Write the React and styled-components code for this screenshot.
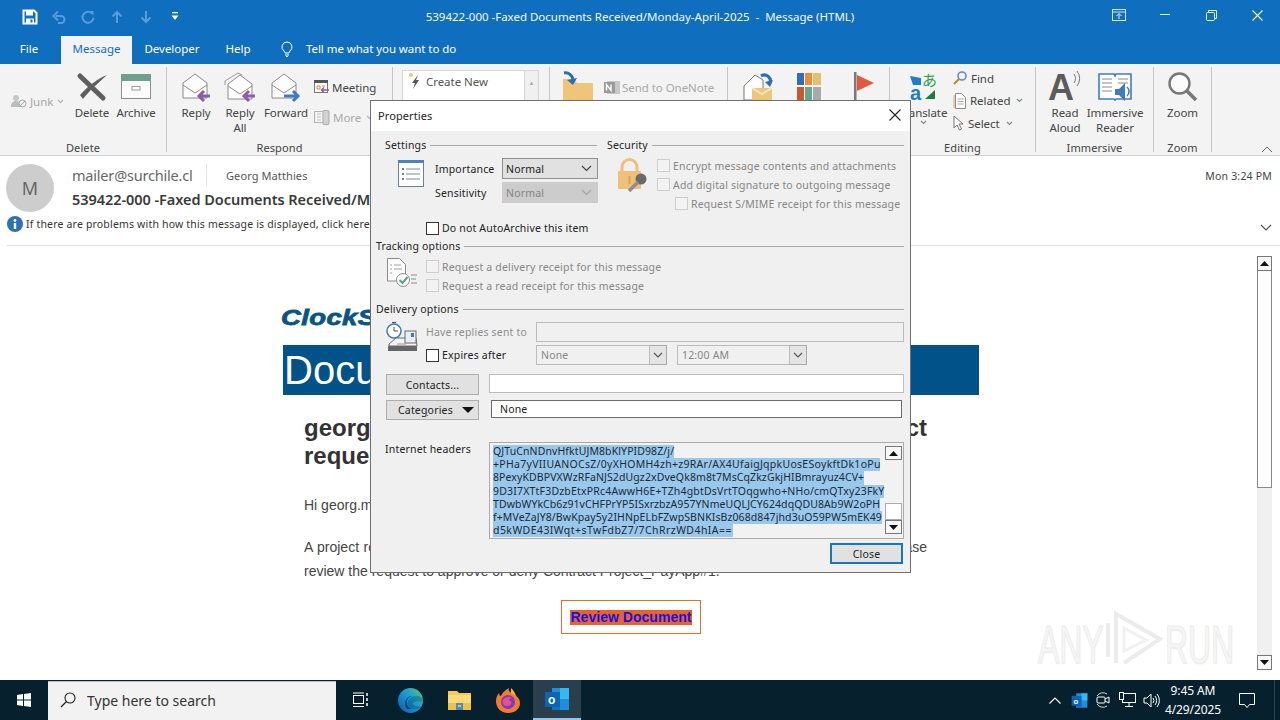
import React from "react";
import styled, { createGlobalStyle } from "styled-components";

const Global = createGlobalStyle`
  html, body { margin: 0; padding: 0; background: #fff; }
  * { box-sizing: border-box; }
  body { font-family: "Noto Sans", "Open Sans", sans-serif; font-size: 11px; color: #333; }
`;

const Screen = styled.div`
  position: relative; width: 1280px; height: 720px; overflow: hidden;
  display: flex; flex-direction: column; background: #fff;
`;
const TitleBar = styled.div`
  height: 36px; background: #106ebe; display: grid; grid-template-columns: 1fr auto 1fr; align-items: center; color: #fff;
`;
const Qat = styled.div`display: flex; padding-left: 15px; margin-top: -3px;`;
const QatButton = styled.div`width: 29px; height: 28px; display: flex; align-items: center; justify-content: center;`;
const Title = styled.div`font-size: 11.5px; letter-spacing: -0.01px; white-space: pre; margin-top: -3px; color: #f4f8fc;`;
const WindowControls = styled.div`display: flex; justify-content: flex-end; margin-top: -6px;`;
const WinButton = styled.div`width: 46px; height: 30px; display: flex; align-items: center; justify-content: center;`;

const TabBar = styled.div`height: 28px; background: #106ebe; display: flex; align-items: stretch; color: #fff; font-size: 11.5px;`;
const Tab = styled.div`
  width: ${p => p.$w}px; margin-left: ${p => p.$ml || 0}px; display: flex; align-items: center; justify-content: center; padding-bottom: 3px;
  background: ${p => p.$active ? "#f3f3f3" : "transparent"}; color: ${p => p.$active ? "#106ebe" : "#fff"};
`;
const TellMe = styled.div`display: flex; align-items: center; gap: 13px; margin-left: 17px; font-size: 11.5px; letter-spacing: -.06px; padding-bottom: 3px;`;

const Ribbon = styled.div`height: 92px; background: #f3f3f3; border-bottom: 1px solid #d2d2d2; display: flex; align-items: flex-start; padding-top: 3px; position: relative;`;
const Group = styled.div`
  width: ${p => p.$w}px; height: 85px; border-right: ${p => p.$last ? "none" : "1px solid #c6c6c6"};
  display: flex; flex-direction: column; flex: none;
`;
const GroupContent = styled.div`height: 73px; display: flex; align-items: flex-start; padding-left: ${p => p.$pl || 0}px;`;
const GroupLabel = styled.div`height: 12px; line-height: 16px; text-align: center; font-size: 11px; color: #444; letter-spacing: .1px;`;
const BigButton = styled.div`
  width: ${p => p.$w}px; margin-left: ${p => p.$ml || 0}px; flex: none; display: flex; flex-direction: column; align-items: center;
  font-size: 11.5px; line-height: 15px; color: #444; letter-spacing: -.1px; text-align: center;
`;
const BigIcon = styled.div`height: 38px; display: flex; align-items: center; justify-content: center; padding-top: 1px;`;
const SmallColumn = styled.div`display: flex; flex-direction: column; margin-left: ${p => p.$ml}px; margin-top: ${p => p.$mt}px; gap: ${p => p.$gap}px;`;
const SmallButton = styled.div`
  display: flex; align-items: center; gap: ${p => p.$gap ?? 3}px; height: 16px; font-size: 11.5px; letter-spacing: -.05px;
  color: ${p => p.$off ? "#a9a9a9" : "#444"}; white-space: nowrap;
`;
const CaretWrap = styled.span`display: block; margin-left: ${p => p.$ml ?? 2}px; line-height: 0;`;
const JunkWrap = styled.div`width: 70px; padding-left: 11px; margin-top: 26px; flex: none;`;
const QuickBox = styled.div`display: flex; width: 137px; height: 60px; margin-top: 3px; background: #fff; border: 1px solid #d6d6d6;`;
const QuickItem = styled.div`flex: 1; display: flex; align-items: flex-start; gap: 4px; padding: 1px 0 0 5px; font-size: 11.5px; color: #555; line-height: 20px; letter-spacing: -.05px;`;
const QuickScroll = styled.div`width: 14px; border-left: 1px solid #d6d6d6; background: #f0f0f0; color: #aaa; font-size: 6px; text-align: center; line-height: 24px;`;
const CollapseCaret = styled.div`position: absolute; right: 7px; bottom: 2px; line-height: 0;`;

const MessageHeader = styled.div`height: 90px; background: #fff; display: flex; flex-direction: column;`;
const HeaderTop = styled.div`height: 60px; display: flex; padding: 8px 8px 0 6px; gap: 18px;`;
const Avatar = styled.div`
  width: 48px; height: 48px; border-radius: 50%; background: #cdcdcd; color: #666; font-size: 18px;
  display: flex; align-items: center; justify-content: center; flex: none;
`;
const HeaderText = styled.div`flex: 1; display: flex; flex-direction: column; padding-top: 0;`;
const SenderRow = styled.div`display: flex; align-items: center; height: 22px;`;
const Sender = styled.div`font-size: 14.5px; color: #666; letter-spacing: -.2px; width: 134px; white-space: nowrap;`;
const Recipient = styled.div`border-left: 1px solid #e4e4e4; padding-left: 19px; height: 22px; line-height: 24px; font-size: 11px; color: #555; letter-spacing: .1px;`;
const Sent = styled.div`margin-left: auto; font-size: 10.5px; color: #444; letter-spacing: .2px; padding-top: 2px;`;
const Subject = styled.div`font-size: 14.5px; font-weight: 600; color: #3a3a3a; margin-top: 3px; line-height: 20px; white-space: nowrap; letter-spacing: -.05px;`;
const InfoRow = styled.div`height: 16px; display: flex; align-items: center; padding: 0 8px 0 7px; gap: 3px; font-size: 10.5px; color: #333; letter-spacing: .18px;`;
const InfoChevron = styled.div`margin-left: auto; line-height: 0; margin-top: 8px;`;
const HeaderRule = styled.div`height: 1px; background: #e2e2e2; margin: 13px 0 0 7px;`;

const Reading = styled.div`height: 434px; display: flex; background: #fff;`;
const EmailColumn = styled.div`flex: 1; padding: 60px 0 0 281px; font-family: "Liberation Sans", Arial, sans-serif; color: #333; overflow: hidden;`;
const Logo = styled.div`
  font-size: 22px; font-weight: 700; font-style: italic; color: #0a5585; line-height: 24px; height: 24px; letter-spacing: .3px;
  -webkit-text-stroke: .8px #0a5585; transform: scaleX(1.25); transform-origin: left center;
`;
const Banner = styled.div`
  width: 696px; height: 50px; margin: 15px 0 0 2px; background: #005288; color: #fff; font-size: 40px; line-height: 50px; padding-left: 1px;
`;
const Heading = styled.div`width: 623px; margin: 19px 0 0 23px; font-size: 24px; font-weight: 700; line-height: 28px; color: #333;`;
const JustLine = styled.span`display: block; white-space: nowrap; text-align: justify; text-align-last: justify; overflow: hidden;`;
const PlainLine = styled.span`display: block; white-space: nowrap;`;
const Para = styled.div`width: 623px; margin: ${p => p.$mt}px 0 0 23px; font-size: 14px; line-height: 24px; color: #444;`;
const ReviewRow = styled.div`width: 696px; margin: 17px 0 0 2px; display: flex; justify-content: center;`;
const ReviewButton = styled.div`width: 140px; height: 34px; border: 1px solid #e0702a; display: flex; align-items: center; justify-content: center;`;
const ReviewText = styled.span`font-size: 14px; line-height: 15px; font-weight: 700; color: #1414e6; background: #e9622a; letter-spacing: .03px;`;

const ScrollTrack = styled.div`width: 15px; margin: 10px 8px 10px 0; flex: none; display: flex; flex-direction: column; background: #f0f0f0;`;
const ScrollArrow = styled.div`
  height: ${p => p.$h || 15}px; width: ${p => p.$w || 15}px; background: #f8f8f8; border: 1px solid #777; display: flex; align-items: center; justify-content: center; flex: none;
`;
const ScrollThumb = styled.div`height: 217px; background: #fff; border: 1px solid #888; border-top: none;`;
const ScrollRest = styled.div`flex: 1;`;

const Watermark = styled.div`
  position: absolute; left: 1038px; top: 610px; height: 60px; width: 195px; display: flex; align-items: center; pointer-events: none;
  font-family: "Liberation Sans", sans-serif;
`;
const WatermarkWord = styled.span`
  display: inline-block; width: 65px; font-size: 53px; line-height: 60px; font-weight: 400; color: #f6f6f6;
  -webkit-text-stroke: 1px #ececec; transform: scaleX(.6); transform-origin: left center; white-space: nowrap; margin-top: 10px; flex: none;
  text-shadow: 1px 1px 2px #ededed;
`;

const Taskbar = styled.div`height: 40px; background: #07202e; display: flex; align-items: stretch; color: #fff;`;
const StartButton = styled.div`width: 48px; display: flex; align-items: center; justify-content: center;`;
const SearchBox = styled.div`
  width: 288px; margin-top: 1px; background: #f2f2f2; border-top: 1px solid #bdbdbd; display: flex; align-items: center; gap: 11px; padding: 0 0 2px 12px;
  font-size: 14px; color: #333; letter-spacing: 0;
`;
const TaskButton = styled.div`
  width: 48px; margin-left: ${p => p.$ml || 0}px; display: flex; align-items: center; justify-content: center;
  background: ${p => p.$active ? "#2b3e4b" : "transparent"}; border-bottom: ${p => p.$active ? "2px solid #8ec6ee" : "none"};
`;
const Tray = styled.div`margin-left: auto; display: flex; align-items: center;`;
const TrayIcon = styled.div`width: 24px; display: flex; align-items: center; justify-content: center;`;
const Clock = styled.div`width: 60px; margin-right: 4px; text-align: center; font-size: 12px; line-height: 19px; color: #fff; letter-spacing: -.1px;`;
const Notify = styled.div`width: 48px; height: 100%; display: flex; align-items: center; justify-content: center; padding-right: 8px; border-right: 1px solid #33444f; margin-right: 5px;`;

const Dialog = styled.div`
  position: absolute; left: 370px; top: 100px; width: 541px; height: 473px; background: #f0f0f0; border: 1px solid #6f6f6f;
  display: flex; flex-direction: column; color: #222; font-size: 10.5px; letter-spacing: .18px;
`;
const DialogTitle = styled.div`height: 30px; background: #fff; display: flex; align-items: center; justify-content: space-between; padding: 0 9px 2px 7px; font-size: 11px; letter-spacing: .1px;`;
const DialogBody = styled.div`flex: 1; padding: 7px 6px 0 5px; display: flex; flex-direction: column;`;
const TopRow = styled.div`display: flex; gap: 10px; margin-left: 9px; height: 97px;`;
const Col = styled.div`width: ${p => p.$w}px; flex: none;`;
const SectionHeading = styled.div`height: 14px; display: flex; align-items: center; gap: 4px; margin-top: ${p => p.$mt || 0}px; line-height: 14px; white-space: nowrap;`;
const SectionRule = styled.div`flex: 1; height: 1px; background: #a8a8a8;`;
const SettingsGrid = styled.div`display: grid; grid-template-columns: 37px 67px 96px; grid-template-rows: 21px 21px; row-gap: 3px; margin: 6px 0 0 13px; align-items: center;`;
const SettingsIconCell = styled.div`grid-row: 1 / 3; align-self: start; margin-top: 2px;`;
const Select = styled.div`
  height: ${p => p.$h || 21}px; display: flex; align-items: center; justify-content: space-between; padding: 0 5px 0 3px;
  background: ${p => p.$off ? "#cccccc" : "#e1e1e1"}; border: 1px solid ${p => p.$off ? "#cccccc" : "#8f8f8f"}; color: ${p => p.$off ? "#858585" : "#222"};
`;
const CheckRow = styled.div`
  height: ${p => p.$h || 19}px; display: flex; align-items: center; gap: 3px; margin-left: ${p => p.$ml || 0}px; margin-top: ${p => p.$mt || 0}px; white-space: nowrap;
  color: ${p => p.$off ? "#868686" : "#222"};
`;
const CheckBox = styled.span`
  width: 13px; height: 13px; flex: none; display: block; background: ${p => p.$off ? "#f3f3f3" : "#fff"}; border: 1px solid ${p => p.$off ? "#cdcdcd" : "#333"};
`;
const SecurityBody = styled.div`display: flex; margin: 4px 0 0 10px; gap: 9px;`;
const LockCell = styled.div`width: 31px; margin-top: 2px;`;
const IconRow = styled.div`display: flex; margin: ${p => p.$mt}px 0 0 10px; gap: ${p => p.$gap}px;`;
const FieldsGrid = styled.div`display: grid; grid-template-columns: 110px auto; grid-template-rows: 20px 20px; row-gap: 3px; align-items: center;`;
const GreyLabel = styled.div`color: #8e8e8e;`;
const Input = styled.div`
  width: ${p => p.$w}px; height: ${p => p.$h || 20}px; flex: none; background: ${p => p.$off ? "#f0f0f0" : "#fff"}; border: 1px solid ${p => p.$dark ? "#6c6c6c" : "#bcbcbc"};
  padding-left: 8px; line-height: ${p => (p.$h || 20) - 2}px; color: #222;
`;
const ExpireControls = styled.div`display: flex; align-items: center;`;
const ComboText = styled.div`width: ${p => p.$w}px; height: 20px; border: 1px solid #bcbcbc; padding-left: 4px; line-height: 18px; color: #868686;`;
const ComboArrow = styled.div`width: 17px; height: 20px; margin-right: ${p => p.$mr || 0}px; background: #e4e4e4; border: 1px solid #a9a9a9; border-left: none; display: flex; align-items: center; justify-content: center;`;
const ActionRow = styled.div`display: flex; margin: ${p => p.$mt}px 0 0 10px; gap: ${p => p.$gap}px; align-items: flex-start;`;
const DlgButton = styled.div`
  width: 93px; height: ${p => p.$h}px; background: #e1e1e1; border: 1px solid #adadad; flex: none; display: flex; align-items: center;
  justify-content: ${p => p.$menu ? "flex-start" : "center"}; padding-left: ${p => p.$menu ? 11 : 0}px; gap: 9px;
  u { text-decoration: underline; }
`;
const DownTri = styled.span`width: 0; height: 0; border-left: 6px solid transparent; border-right: 6px solid transparent; border-top: 6px solid #111; display: block;`;
const HeadersRow = styled.div`display: flex; margin: 22px 0 0 9px;`;
const HeadersLabel = styled.div`width: 104px; line-height: 14px;`;
const HeadersBox = styled.div`width: 415px; height: 97px; border: 1px solid #ababab; background: #f2f2f2; display: flex; padding: 2px 1px 0 3px; overflow: hidden;`;
const HeadersText = styled.div`
  flex: 1; height: 93px; font-size: 10.5px; line-height: 13.2px; color: #1a2a38; font-family: "Noto Sans", sans-serif;
`;
const HeaderLine = styled.span`display: block; width: ${p => p.$w}px; background: #99c8ec; white-space: nowrap; letter-spacing: ${p => p.$ls}px;`;
const MiniScroll = styled.div`width: 17px; height: 88px; margin-top: 1px; display: flex; flex-direction: column; flex: none;`;
const MiniThumb = styled.div`height: 17px; margin-top: auto; background: #fff; border: 1px solid #ababab;`;
const CloseRow = styled.div`display: flex; justify-content: flex-end; margin: 4px 1px 0 0;`;
const CloseButton = styled.div`width: 73px; height: 21px; background: #e1e1e1; border: 2px solid #1777bd; display: flex; align-items: center; justify-content: center;`;

/* ---- drawn icons ---- */
const Svg = ({ w, h, vb, children, style }) => <svg width={w} height={h} viewBox={vb || `0 0 ${w} ${h}`} style={{ display: "block", overflow: "visible", ...style }}>{children}</svg>;

const SaveIcon = () => <Svg w={16} h={16}><path d="M1.500 1.500h10.500l2.500 2.500v10.500h-13z" fill="none" stroke="#fff" strokeWidth="2"/><rect x="4" y="2" width="7" height="4.500" fill="#fff"/><rect x="4" y="9.500" width="8" height="5" fill="#fff"/><rect x="8.500" y="10.500" width="2" height="3" fill="#106ebe"/></Svg>;
const UndoIcon = () => <Svg w={14} h={14}><path d="M4 6h5a3.500 3.500 0 0 1 0 7H6" fill="none" stroke="#5b9bd6" strokeWidth="2"/><path d="M6 1.500L1.500 6 6 10.500" fill="none" stroke="#5b9bd6" strokeWidth="2"/></Svg>;
const RedoIcon = () => <Svg w={14} h={14}><path d="M11 3.500A5.500 5.500 0 1 0 12.500 7.500" fill="none" stroke="#5b9bd6" strokeWidth="2"/><path d="M8 1l4.500 0v4.500z" fill="#5b9bd6"/></Svg>;
const ArrowIcon = ({ down }) => <Svg w={12} h={14} style={down ? { transform: "scaleY(-1)" } : undefined}><path d="M6 13V3M1.500 6.500L6 2l4.500 4.500" fill="none" stroke="#5b9bd6" strokeWidth="2"/></Svg>;
const CustomizeIcon = () => <Svg w={8} h={9}><rect x="1" y="0" width="6" height="1.300" fill="#fff"/><path d="M0.500 3.500h7L4 8z" fill="#fff"/></Svg>;
const RibbonDisplayIcon = () => <Svg w={14} h={12}><rect x=".5" y=".5" width="13" height="11" fill="none" stroke="#d8e8f6"/><path d="M.5 3h13" stroke="#d8e8f6"/><path d="M7 10V5M4.500 7L7 4.500 9.500 7" fill="none" stroke="#d8e8f6"/></Svg>;
const MinIcon = () => <Svg w={11} h={2}><rect width="10" height="1" fill="#e8f1f9"/></Svg>;
const RestoreIcon = () => <Svg w={11} h={11}><rect x=".5" y="2.500" width="8" height="8" rx="1" fill="none" stroke="#e8f1f9"/><path d="M2.500 2.500V.5h8v8H8.500" fill="none" stroke="#e8f1f9"/></Svg>;
const XIcon = ({ s = 11, c = "#e8f1f9" }) => <Svg w={s} h={s}><path d={`M.5 .5L${s - .5} ${s - .5}M${s - .5} .5L.5 ${s - .5}`} stroke={c} strokeWidth="1.100"/></Svg>;
const BulbIcon = () => <Svg w={12} h={16}><path d="M6 1a5 5 0 0 0-3 9c.7.700 1 1.500 1 2h4c0-.5.300-1.300 1-2a5 5 0 0 0-3-9z" fill="none" stroke="#fff"/><path d="M4 14h4M5 15.500h2" stroke="#fff"/></Svg>;

const JunkIcon = () => <Svg w={16} h={14}><circle cx="5" cy="4" r="3" fill="#c6c6c6"/><path d="M0 12c0-3 2-5 5-5s4 1 5 2v4H0z" fill="#bdbdbd"/><circle cx="11.500" cy="9.500" r="3.500" fill="#eee" stroke="#a8a8a8"/><path d="M9 12l5-5" stroke="#a8a8a8"/></Svg>;
const DeleteIcon = () => <Svg w={30} h={27}><path d="M3 3L26 25" stroke="#5f5f5f" strokeWidth="5" strokeLinecap="round"/><path d="M30 2C22 5 12 12 3 22l3 4c6-8 14-15 24-24z" fill="#5f5f5f"/></Svg>;
const ArchiveIcon = () => <Svg w={30} h={25}><rect x=".5" y="6.500" width="29" height="18" fill="#fbfbfb" stroke="#8c8c8c"/><rect width="30" height="7" fill="#6f9f8d"/><rect x="11" y="12.500" width="8" height="3.500" fill="none" stroke="#9a9a9a"/></Svg>;
const EnvelopeOpen = ({ second }) => (
  <g>
    {second && <path d="M1 13V9L14 1l4 2" fill="none" stroke="#9b9b9b"/>}
    <path d={second ? "M4 27V12L16 3l12 9v15z" : "M2 26V11L14 2l12 9v15z"} fill="#fdfdfd" stroke="#8a8a8a"/>
    <path d={second ? "M4 14l12 8 12-8" : "M2 13l12 8 12-8"} fill="none" stroke="#8a8a8a"/>
  </g>
);
const ReplyIcon = () => <Svg w={30} h={30}><EnvelopeOpen/><path d="M29 24H19M23 19l-5 5 5 5" fill="none" stroke="#8d5aac" strokeWidth="3"/></Svg>;
const ReplyAllIcon = () => <Svg w={32} h={30}><EnvelopeOpen second/><path d="M31 24H21M25 19l-5 5 5 5" fill="none" stroke="#8d5aac" strokeWidth="3"/></Svg>;
const ForwardIcon = () => <Svg w={32} h={30}><EnvelopeOpen/><path d="M14 24h12M23 19l5 5-5 5" fill="none" stroke="#3f7cbf" strokeWidth="3"/></Svg>;
const MeetingIcon = () => <Svg w={15} h={14}><rect x=".5" y="1.500" width="13" height="11" fill="#fff" stroke="#777"/><rect y="0" width="14" height="3" fill="#555"/><path d="M3 6h3v3H3zM8 6h3" fill="none" stroke="#d98b2c"/><path d="M15 10H8M10 7.500L7.500 10l2.500 2.500" fill="none" stroke="#8d5aac" strokeWidth="1.500"/></Svg>;
const MoreIcon = () => <Svg w={16} h={15}><rect x=".5" y="1.500" width="9" height="11" fill="none" stroke="#b5b5b5"/><path d="M3 4h4M3 7h4M3 10h4" stroke="#c5c5c5"/><rect x="9" y=".5" width="6" height="14" rx="1" fill="#d2d2d2" stroke="#aaa"/></Svg>;
const BoltIcon = () => <Svg w={14} h={18}><circle cx="3" cy="3" r="2" fill="#e8c777"/><path d="M10 3L4 11h3l-2 6 6-9H8z" fill="#555"/></Svg>;
const FolderIcon = () => <Svg w={30} h={30}><path d="M0 7h11l3 4h16v19H0z" fill="#efc677"/><path d="M1 1c4-1 9 2 9 8" fill="none" stroke="#2b6fb5" strokeWidth="3"/><path d="M4 8l6 5 4-7z" fill="#2b6fb5"/></Svg>;
const OneNoteIcon = () => <Svg w={16} h={15}><rect x="3" y="1" width="13" height="13" fill="#c9c9c9"/><rect y="2" width="11" height="11" fill="#9a9a9a"/><path d="M2.500 10.500V4.500l4.500 6V4.500" fill="none" stroke="#fff" strokeWidth="1.400"/></Svg>;
const RulesIcon = () => <Svg w={30} h={30}><path d="M1 14L12 3l8 5v20H1z" fill="#fff" stroke="#777"/><rect x="9" y="16" width="20" height="14" fill="#efc677"/><path d="M9 16l10 6 10-6" fill="none" stroke="#fbe6bd" strokeWidth="2"/><path d="M18 4a6 6 0 0 1 9 7" fill="none" stroke="#2b6fb5" strokeWidth="3"/><path d="M22 10l5 5 3-7z" fill="#2b6fb5"/></Svg>;
const CategorizeIcon = () => <Svg w={24} h={28}><rect width="7" height="12" fill="#2f6fb7"/><rect x="8" width="7" height="12" fill="#e98f3b"/><rect x="16" width="8" height="12" fill="#e3c06f"/><rect y="14" width="7" height="14" fill="#c9582f"/><rect x="8" y="14" width="7" height="14" fill="#63a78f"/><rect x="16" y="14" width="8" height="14" fill="#a9a9a9"/></Svg>;
const FlagIcon = () => <Svg w={20} h={30}><rect x="0" width="2.500" height="30" fill="#777"/><path d="M3 3l17 8-17 8z" fill="#e5583c"/></Svg>;
const TranslateIcon = () => <Svg w={28} h={29}><path d="M1 4l11 2v7H4z" fill="#1b7fc9"/><text x="13" y="14" fontSize="15" fill="#2e9a45" fontFamily="Noto Sans CJK JP">あ</text><text x="1" y="28" fontSize="20" fill="#1b7fc9" fontWeight="700" fontFamily="Liberation Sans">a</text><path d="M16 27l10-9v9z" fill="#1f7a3d"/></Svg>;
const FindIcon = () => <Svg w={14} h={14}><circle cx="9" cy="5" r="4" fill="none" stroke="#5a8fc4" strokeWidth="1.600"/><path d="M6 8l-5 5" stroke="#c08a3e" strokeWidth="2.200"/></Svg>;
const RelatedIcon = () => <Svg w={13} h={16}><path d="M2.500 .5h6l4 4v11h-10z" fill="#fff" stroke="#8a8a8a"/><path d="M4.500 6h6M4.500 8.500h6M4.500 11h6" stroke="#a5a5a5"/><path d="M1 2v13" stroke="#e0b77a" strokeWidth="1.200"/></Svg>;
const SelectIcon = () => <Svg w={11} h={16}><path d="M1 1v12l3-3 2.500 5 2-1-2.500-5h4z" fill="#fff" stroke="#777"/></Svg>;
const ReadAloudIcon = () => <Svg w={32} h={28}><text x="-1" y="27" fontSize="36" fontWeight="700" fill="#5b5b5b" fontFamily="Liberation Sans">A</text><path d="M25 1a8 8 0 0 1 0 9M28 -2a12 12 0 0 1 0 15" fill="none" stroke="#777"/></Svg>;
const ReaderIcon = () => <Svg w={34} h={30}><path d="M1 2h15l1 2 1-2h15v25H18l-1 1-1-1H1z" fill="#fff" stroke="#3f7cbf" strokeWidth="1.600"/><path d="M4 7h10M4 11h10M4 15h10M4 19h10M20 7h10M20 11h10" stroke="#8a8a8a"/><path d="M17 17h4l6-6v18l-6-6h-4z" fill="#3f7cbf"/><path d="M29 15a6 6 0 0 1 0 9" fill="none" stroke="#3f7cbf" strokeWidth="1.500"/></Svg>;
const ZoomIcon = () => <Svg w={30} h={29}><circle cx="11.500" cy="11.500" r="10" fill="#fbfbfb" stroke="#777" strokeWidth="2.400"/><path d="M19 19l9 9" stroke="#777" strokeWidth="3.600"/></Svg>;
const CollapseIcon = () => <Svg w={12} h={7}><path d="M1 6l5-5 5 5" fill="none" stroke="#666"/></Svg>;
const InfoIcon = () => <Svg w={16} h={16}><circle cx="8" cy="8" r="8" fill="#2f6fb7"/><rect x="6.800" y="7" width="2.400" height="6" fill="#fff"/><circle cx="8" cy="4.500" r="1.400" fill="#fff"/></Svg>;
const ChevronIcon = ({ s = 12, c = "#555" }) => <Svg w={s} h={Math.ceil(s * .6)}><path d={`M1 1l${s / 2 - 1} ${s / 2 - 1} ${s / 2 - 1} -${s / 2 - 1}`} fill="none" stroke={c} strokeWidth="1.200"/></Svg>;
const Caret = ({ ml, c = "#888" }) => <CaretWrap $ml={ml}><ChevronIcon s={7} c={c} /></CaretWrap>;
const UpTri = () => <Svg w={9} h={5}><path d="M0 5L4.500 0 9 5z" fill="#111"/></Svg>;
const DownTriIcon = () => <Svg w={9} h={5}><path d="M0 0h9L4.500 5z" fill="#111"/></Svg>;

const SettingsListIcon = () => <Svg w={26} h={27}><rect x=".5" y=".5" width="25" height="26" fill="#fff" stroke="#6e7f95"/><rect width="26" height="3" fill="#4d80bd"/><path d="M4 9h2M4 14h2M4 19h2" stroke="#6e7f95" strokeWidth="2"/><path d="M8 9h14M8 14h14M8 19h14" stroke="#7f8b9a"/></Svg>;
const LockKeyIcon = () => <Svg w={31} h={34}><path d="M5 14V9a7.500 7.500 0 0 1 15 0v5" fill="none" stroke="#efc077" strokeWidth="3"/><rect x="1" y="13" width="23" height="18" rx="1" fill="#efc077"/><path d="M12.500 18v8" stroke="#d9a253" strokeWidth="2"/><circle cx="24" cy="21" r="5.500" fill="#6a6a6a"/><path d="M21 24l-9 9" stroke="#8f8f8f" strokeWidth="3.500"/></Svg>;
const TrackingIcon = () => <Svg w={32} h={32}><path d="M1.500 1.500h12l6 6V24h-18z" fill="#fbfbfb" stroke="#8a8a8a"/><path d="M4 8h2M4 12h2M4 16h2M8 8h7M8 12h8" stroke="#a2a2a2"/><circle cx="17" cy="23" r="6.500" fill="#fff" stroke="#8a8a8a"/><path d="M13.500 23l3 3 5-6" fill="none" stroke="#4da58a" strokeWidth="2"/><path d="M25 18h6M25 22h5M25 26h6" stroke="#8a8a8a"/></Svg>;
const DeliveryIcon = () => <Svg w={32} h={30}><circle cx="8" cy="9" r="7" fill="#fff" stroke="#3f7cbf" strokeWidth="1.500"/><path d="M8 5v4h4" fill="none" stroke="#555"/><path d="M6 .5h4" stroke="#555" strokeWidth="1.200"/><path d="M3 22l7-6h20l1 8H3z" fill="#f4f4f4" stroke="#6a6a6a"/><path d="M2 24h29v5H2z" fill="#666"/><rect x="19" y="9" width="11" height="12" fill="#e8eef5" stroke="#6a6a6a"/><rect x="25" y="11" width="3" height="4" fill="#3f7cbf"/><path d="M11 22h9" stroke="#999"/></Svg>;

const WinLogo = () => <Svg w={14} h={14}><path d="M0 2l6-.9V6.600H0zM7 1l7-1v6.600H7zM0 7.400h6v5.600l-6-.9zM7 7.400h7V14l-7-1z" fill="#fff"/></Svg>;
const SearchGlass = () => <Svg w={16} h={16}><circle cx="10" cy="6" r="5" fill="none" stroke="#222" strokeWidth="1.100"/><path d="M6.500 9.500L1 15" stroke="#222" strokeWidth="1.300"/></Svg>;
const TaskViewIcon = () => <Svg w={17} h={16}><rect x="1.500" y="3.500" width="10" height="8" fill="none" stroke="#fff"/><path d="M1 1h11M1 14.500h11" stroke="#fff"/><path d="M15 1v3M15 6v3M15 11v3" stroke="#fff" strokeWidth="1.500"/></Svg>;
const EdgeIcon = () => <Svg w={25} h={25}><defs><linearGradient id="edgeG" x1="0" y1="1" x2="1" y2="0"><stop offset="0" stopColor="#0c59a4"/><stop offset=".55" stopColor="#1a9bd8"/><stop offset="1" stopColor="#4fd06b"/></linearGradient></defs><circle cx="12.500" cy="12.500" r="12.500" fill="url(#edgeG)"/><path d="M25 13c0-3-3-5-6-5-5 0-9 3-9 7 0 3 3 6 7 6 3 0 5-1 7-3l-2 .5c-4 0-7-1-7-3 0-1 1-2 3-2h7z" fill="#07202e" opacity=".25"/><path d="M9 21C5 16 8 8 14 8c-4 1-6 4-5 8 .5 2 2 4 5 5z" fill="#0c3f7a"/></Svg>;
const ExplorerIcon = () => <Svg w={23} h={20}><path d="M0 1h9l2 2h12v17H0z" fill="#f8c94f"/><rect y="5" width="23" height="15" fill="#fbd978"/><rect x="0" y="13" width="23" height="7" fill="#f0c144"/><rect x="8" y="13" width="7" height="7" fill="#3f8fd6"/><rect x="10" y="15" width="3" height="2" fill="#f0c144"/></Svg>;
const FirefoxIcon = () => <Svg w={24} h={25}><path d="M12 25C5 25 0 20 0 13c0-3 1-6 3-8 0 2 1 3 2 3 1-3 4-6 8-8-1 3 1 4 3 5 4 2 8 5 8 10 0 6-5 10-12 10z" fill="#f57b2b"/><path d="M15 0c3 3 4 5 5 8l-5-3z" fill="#fdb52a"/><circle cx="12" cy="14" r="7" fill="#7a3bc2"/><path d="M7 12c2-3 6-4 9-2-2 0-3 1-3 2 2 1 3 2 2 4s-5 3-7 1c-1-1-2-3-1-5z" fill="#e6508e"/></Svg>;
const OutlookIcon = ({ s = 26 }) => <Svg w={s} h={s} vb="0 0 26 26"><rect x="8" y="2" width="17" height="22" fill="#1f8fdc"/><rect x="16" y="2" width="9" height="11" fill="#35b8f0"/><rect x="8" y="13" width="8" height="11" fill="#0f6fc0"/><rect x="1" y="6" width="15" height="15" fill="#0c64b5"/><text x="4" y="18" fontSize="12" fontWeight="700" fill="#fff" fontFamily="Liberation Sans">o</text></Svg>;
const TrayChevron = () => <Svg w={12} h={7}><path d="M.5 6.500l5.500-5.500 5.500 5.500" fill="none" stroke="#fff" strokeWidth="1.100"/></Svg>;
const MeetIcon = () => <Svg w={16} h={16}><path d="M2 4a7 7 0 0 1 10-2M2 12a7 7 0 0 0 10 2" fill="none" stroke="#cfd6da"/><rect x="2" y="5" width="8" height="6" rx="1" fill="none" stroke="#fff"/><path d="M10 7l4-2v6l-4-2" fill="none" stroke="#fff"/></Svg>;
const NetIcon = () => <Svg w={17} h={16}><rect x="3.500" y="1.500" width="13" height="9" fill="none" stroke="#fff"/><rect x=".5" y=".5" width="4" height="7" fill="#07202e" stroke="#fff"/><path d="M10 11v3M6 14.500h8" stroke="#fff"/></Svg>;
const VolumeIcon = () => <Svg w={17} h={15}><path d="M1 5h3l4-4v13l-4-4H1z" fill="none" stroke="#fff"/><path d="M10 5a4 4 0 0 1 0 5M12 3a7 7 0 0 1 0 9M14 1a10 10 0 0 1 0 13" fill="none" stroke="#fff"/></Svg>;
const NotifyIcon = () => <Svg w={16} h={15}><path d="M.5 .5h15v11h-5l-2.500 3-2.500-3h-5z" fill="none" stroke="#fff"/></Svg>;
const RunTriangle = () => <Svg w={62} h={62}><path d="M5 48V14M13 54V5l44 25-36 24" fill="none" stroke="#ececec" strokeWidth="4"/><path d="M21 42V19l22 12z" fill="none" stroke="#f1f1f1" strokeWidth="3"/></Svg>;

const headerLines = [
  ["QJTuCnNDnvHfktUJM8bKlYPID98Z/j/", 181, .1],
  ["+PHa7yVIIUANOCsZ/0yXHOMH4zh+z9RAr/AX4UfaigJqpkUosESoykftDk1oPu", 387, .29],
  ["8PexyKDBPVXWzRFaNJS2dUgz2xDveQk8m8t7MsCqZkzGkjHIBmrayuz4CV+", 371, .1],
  ["9D3I7XTtF3DzbEtxPRc4AwwH6E+TZh4gbtDsVrtTOqgwho+NHo/cmQTxy23FkY", 391, .19],
  ["TDwbWYkCb6z91vCHFPrYP5ISxrzbzA957YNmeUQLJCY624dqQDU8Ab9W2oPH", 387, .08],
  ["f+MVeZaJY8/BwKpay5y2IHNpELbFZwpSBNKIsBz068d847jhd3uO59PW5mEK49", 389, .1],
  ["d5kWDE43IWqt+sTwFdbZ7/7ChRrzWD4hIA==", 240, .44],
];

export default function App() {
  return (
    <Screen>
      <Global />
      <TitleBar>
        <Qat>
          <QatButton><SaveIcon /></QatButton>
          <QatButton><UndoIcon /></QatButton>
          <QatButton><RedoIcon /></QatButton>
          <QatButton><ArrowIcon /></QatButton>
          <QatButton><ArrowIcon down /></QatButton>
          <QatButton><CustomizeIcon /></QatButton>
        </Qat>
        <Title>539422-000 -Faxed Documents Received/Monday-April-2025  -  Message (HTML)</Title>
        <WindowControls>
          <WinButton><RibbonDisplayIcon /></WinButton>
          <WinButton><MinIcon /></WinButton>
          <WinButton><RestoreIcon /></WinButton>
          <WinButton><XIcon /></WinButton>
        </WindowControls>
      </TitleBar>
      <TabBar>
        <Tab $w={58}>File</Tab>
        <Tab $w={71} $ml={3} $active>Message</Tab>
        <Tab $w={80}>Developer</Tab>
        <Tab $w={52}>Help</Tab>
        <TellMe><BulbIcon />Tell me what you want to do</TellMe>
      </TabBar>
      <Ribbon>
        <Group $w={167}>
          <GroupContent>
            <JunkWrap><SmallButton $off $gap={3}><JunkIcon />Junk<Caret ml={1} c="#b5b5b5" /></SmallButton></JunkWrap>
            <BigButton $w={44}><BigIcon><DeleteIcon /></BigIcon>Delete</BigButton>
            <BigButton $w={44}><BigIcon><ArchiveIcon /></BigIcon>Archive</BigButton>
          </GroupContent>
          <GroupLabel>Delete</GroupLabel>
        </Group>
        <Group $w={226}>
          <GroupContent $pl={7}>
            <BigButton $w={44}><BigIcon><ReplyIcon /></BigIcon>Reply</BigButton>
            <BigButton $w={44}><BigIcon><ReplyAllIcon /></BigIcon>Reply<br />All</BigButton>
            <BigButton $w={48}><BigIcon><ForwardIcon /></BigIcon>Forward</BigButton>
            <SmallColumn $ml={4} $mt={12} $gap={14}>
              <SmallButton><MeetingIcon />Meeting</SmallButton>
              <SmallButton $off><MoreIcon />More<Caret c="#b5b5b5" /></SmallButton>
            </SmallColumn>
          </GroupContent>
          <GroupLabel>Respond</GroupLabel>
        </Group>
        <Group $w={157}>
          <GroupContent $pl={9}>
            <QuickBox>
              <QuickItem><BoltIcon />Create New</QuickItem>
              <QuickScroll>▲</QuickScroll>
            </QuickBox>
          </GroupContent>
          <GroupLabel>Quick Steps</GroupLabel>
        </Group>
        <Group $w={178}>
          <GroupContent $pl={13}>
            <BigButton $w={30}><BigIcon><FolderIcon /></BigIcon></BigButton>
            <SmallColumn $ml={11} $mt={12} $gap={0}>
              <SmallButton $off $gap={2}><OneNoteIcon />Send to OneNote</SmallButton>
            </SmallColumn>
          </GroupContent>
          <GroupLabel>Move</GroupLabel>
        </Group>
        <Group $w={162}>
          <GroupContent $pl={15}>
            <BigButton $w={30}><BigIcon><RulesIcon /></BigIcon></BigButton>
            <BigButton $w={24} $ml={24}><BigIcon><CategorizeIcon /></BigIcon></BigButton>
            <BigButton $w={20} $ml={33}><BigIcon><FlagIcon /></BigIcon></BigButton>
          </GroupContent>
          <GroupLabel>Tags</GroupLabel>
        </Group>
        <Group $w={146}>
          <GroupContent $pl={11}>
            <BigButton $w={44}><BigIcon><TranslateIcon /></BigIcon>Translate<Caret ml={0} /></BigButton>
            <SmallColumn $ml={8} $mt={3} $gap={6.500}>
              <SmallButton $gap={4}><FindIcon />Find</SmallButton>
              <SmallButton $gap={4}><RelatedIcon />Related<Caret /></SmallButton>
              <SmallButton $gap={4}><SelectIcon />Select<Caret /></SmallButton>
            </SmallColumn>
          </GroupContent>
          <GroupLabel>Editing</GroupLabel>
        </Group>
        <Group $w={118}>
          <GroupContent $pl={4}>
            <BigButton $w={50}><BigIcon><ReadAloudIcon /></BigIcon>Read<br />Aloud</BigButton>
            <BigButton $w={50}><BigIcon><ReaderIcon /></BigIcon>Immersive<br />Reader</BigButton>
          </GroupContent>
          <GroupLabel>Immersive</GroupLabel>
        </Group>
        <Group $w={58}>
          <GroupContent>
            <BigButton $w={57}><BigIcon><ZoomIcon /></BigIcon>Zoom</BigButton>
          </GroupContent>
          <GroupLabel>Zoom</GroupLabel>
        </Group>
        <CollapseCaret><CollapseIcon /></CollapseCaret>
      </Ribbon>
      <MessageHeader>
        <HeaderTop>
          <Avatar>M</Avatar>
          <HeaderText>
            <SenderRow>
              <Sender>mailer@surchile.cl</Sender>
              <Recipient>Georg Matthies</Recipient>
              <Sent>Mon 3:24 PM</Sent>
            </SenderRow>
            <Subject>539422-000 -Faxed Documents Received/Monday-April-2025</Subject>
          </HeaderText>
        </HeaderTop>
        <InfoRow>
          <InfoIcon />
          If there are problems with how this message is displayed, click here to view it in a web browser.
          <InfoChevron><ChevronIcon /></InfoChevron>
        </InfoRow>
        <HeaderRule />
      </MessageHeader>
      <Reading>
        <EmailColumn>
          <Logo>ClockShark</Logo>
          <Banner>Document</Banner>
          <Heading>
            <JustLine>georg.matthies@surchile.cl you have a new project</JustLine>
            <PlainLine>request</PlainLine>
          </Heading>
          <Para $mt={23}>Hi georg.matthies@surchile.cl,</Para>
          <Para $mt={18}>
            <JustLine>A project request has been submitted for your approval in the ClockShark system this week. Please</JustLine>
            <PlainLine>review the request to approve or deny Contract Project_PayApp#1.</PlainLine>
          </Para>
          <ReviewRow>
            <ReviewButton><ReviewText>Review Document</ReviewText></ReviewButton>
          </ReviewRow>
        </EmailColumn>
        <ScrollTrack>
          <ScrollArrow><UpTri /></ScrollArrow>
          <ScrollThumb />
          <ScrollRest />
          <ScrollArrow><DownTriIcon /></ScrollArrow>
        </ScrollTrack>
      </Reading>
      <Taskbar>
        <StartButton><WinLogo /></StartButton>
        <SearchBox><SearchGlass />Type here to search</SearchBox>
        <TaskButton><TaskViewIcon /></TaskButton>
        <TaskButton $ml={2}><EdgeIcon /></TaskButton>
        <TaskButton $ml={1}><ExplorerIcon /></TaskButton>
        <TaskButton $ml={1}><FirefoxIcon /></TaskButton>
        <TaskButton $ml={1} $active><OutlookIcon /></TaskButton>
        <Tray>
          <TrayIcon><TrayChevron /></TrayIcon>
          <TrayIcon><OutlookIcon s={17} /></TrayIcon>
          <TrayIcon><MeetIcon /></TrayIcon>
          <TrayIcon><NetIcon /></TrayIcon>
          <TrayIcon><VolumeIcon /></TrayIcon>
          <Clock>9:45 AM<br />4/29/2025</Clock>
          <Notify><NotifyIcon /></Notify>
        </Tray>
      </Taskbar>

      <Watermark>
        <WatermarkWord>ANY</WatermarkWord>
        <RunTriangle />
        <WatermarkWord>RUN</WatermarkWord>
      </Watermark>

      <Dialog>
        <DialogTitle>Properties<XIcon s={12} c="#222" /></DialogTitle>
        <DialogBody>
          <TopRow>
            <Col $w={212}>
              <SectionHeading>Settings<SectionRule /></SectionHeading>
              <SettingsGrid>
                <SettingsIconCell><SettingsListIcon /></SettingsIconCell>
                <div>Importance</div>
                <Select>Normal<ChevronIcon s={11} c="#444" /></Select>
                <div>Sensitivity</div>
                <Select $off>Normal<ChevronIcon s={11} c="#a5a5a5" /></Select>
              </SettingsGrid>
              <CheckRow $h={14} $ml={41} $mt={18}><CheckBox />Do not AutoArchive this item</CheckRow>
            </Col>
            <Col $w={297}>
              <SectionHeading>Security<SectionRule /></SectionHeading>
              <SecurityBody>
                <LockCell><LockKeyIcon /></LockCell>
                <div>
                  <CheckRow $off><CheckBox $off />Encrypt message contents and attachments</CheckRow>
                  <CheckRow $off><CheckBox $off />Add digital signature to outgoing message</CheckRow>
                  <CheckRow $off $ml={18}><CheckBox $off />Request S/MIME receipt for this message</CheckRow>
                </div>
              </SecurityBody>
            </Col>
          </TopRow>
          <SectionHeading $mt={4}>Tracking options<SectionRule /></SectionHeading>
          <IconRow $mt={4} $gap={8}>
            <TrackingIcon />
            <div>
              <CheckRow $off><CheckBox $off />Request a delivery receipt for this message</CheckRow>
              <CheckRow $off><CheckBox $off />Request a read receipt for this message</CheckRow>
            </div>
          </IconRow>
          <SectionHeading $mt={7}>Delivery options<SectionRule /></SectionHeading>
          <IconRow $mt={6} $gap={8}>
            <DeliveryIcon />
            <FieldsGrid>
              <GreyLabel>Have replies sent to</GreyLabel>
              <Input $w={368} $off />
              <CheckRow $h={14}><CheckBox />Expires after</CheckRow>
              <ExpireControls>
                <ComboText $w={114}>None</ComboText>
                <ComboArrow $mr={10}><ChevronIcon s={10} c="#555" /></ComboArrow>
                <ComboText $w={113}>12:00 AM</ComboText>
                <ComboArrow><ChevronIcon s={10} c="#555" /></ComboArrow>
              </ExpireControls>
            </FieldsGrid>
          </IconRow>
          <ActionRow $mt={9} $gap={10}>
            <DlgButton $h={21}>Contacts...</DlgButton>
            <Input $w={415} $h={19} />
          </ActionRow>
          <ActionRow $mt={5} $gap={12}>
            <DlgButton $h={20} $menu><span>Cate<u>g</u>ories</span><DownTri /></DlgButton>
            <Input $w={411} $h={18} $dark>None</Input>
          </ActionRow>
          <HeadersRow>
            <HeadersLabel>Internet headers</HeadersLabel>
            <HeadersBox>
              <HeadersText>
                {headerLines.map(([t, w, ls]) => <HeaderLine key={t} $w={w} $ls={ls}>{t}</HeaderLine>)}
              </HeadersText>
              <MiniScroll>
                <ScrollArrow $h={14} $w={17}><UpTri /></ScrollArrow>
                <MiniThumb />
                <ScrollArrow $h={14} $w={17}><DownTriIcon /></ScrollArrow>
              </MiniScroll>
            </HeadersBox>
          </HeadersRow>
          <CloseRow><CloseButton>Close</CloseButton></CloseRow>
        </DialogBody>
      </Dialog>
    </Screen>
  );
}
